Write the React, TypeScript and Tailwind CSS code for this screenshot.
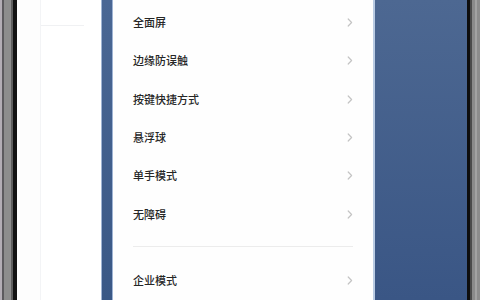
import React from "react";

const items = ["全面屏", "边缘防误触", "按键快捷方式", "悬浮球", "单手模式", "无障碍"];

function Chevron() {
  return (
    <svg width="6" height="9" viewBox="0 0 6 9" className="shrink-0">
      <polyline points="1.2,1 4.6,4.5 1.2,8" fill="none" stroke="#c4c4c4" strokeWidth="1.2" strokeLinecap="round" strokeLinejoin="round" />
    </svg>
  );
}

function Row({ label }: { label: string }) {
  return (
    <div className="flex h-[38.5px] items-center justify-between">
      <span className="text-[11px] font-medium leading-none text-[#262626]">{label}</span>
      <Chevron />
    </div>
  );
}

export default function App() {
  return (
    <div
      className="flex h-[300px] w-[480px] overflow-hidden bg-white"
      style={{ fontFamily: '"Noto Sans CJK SC", "Noto Sans", sans-serif' }}
    >
      {/* left phone frame */}
      <div className="flex h-full w-[17px] shrink-0">
        <div className="w-[2px] bg-[#b3adb5]" />
        <div className="w-[2px] bg-[#5c5a5e]" />
        <div className="w-[7px] bg-[#8d8d8d]" />
        <div className="w-[2px] bg-[#5e5e5e]" />
        <div className="w-[4px] bg-[#121212]" />
      </div>
      {/* left white area */}
      <div className="flex h-full w-[84px] shrink-0 bg-white">
        <div className="w-[23px] bg-[#fdfdfd]" />
        <div className="flex w-[61px] flex-col border-l border-[#f3f4f6]">
          <div className="h-[26px] w-[43px] border-b border-[#f0f1f3]" />
        </div>
      </div>
      {/* left blue strip */}
      <div className="h-full w-[12px] shrink-0 border-x border-[#9fb4d4] bg-gradient-to-b from-[#4a6794] to-[#3a5886]" />
      {/* settings list */}
      <div className="flex h-full w-[260px] shrink-0 flex-col bg-[#fefefe] px-[20px] pt-[3px]">
        {items.map((t) => (
          <Row key={t} label={t} />
        ))}
        <div className="mt-[12px] h-px w-full bg-[#ececec]" />
        <div className="mt-[15px]">
          <Row label="企业模式" />
        </div>
      </div>
      {/* right blue area */}
      <div className="h-full w-[94px] shrink-0 border-l-2 border-[#b9cbe3] bg-gradient-to-b from-[#4d6892] to-[#3a5685]" />
      {/* right phone frame */}
      <div className="flex h-full w-[13px] shrink-0">
        <div className="w-[3px] bg-[#0e0e0e]" />
        <div className="w-[2px] bg-[#4a4a4a]" />
        <div className="w-[3px] bg-[#8a8a8a]" />
        <div className="w-[2px] bg-[#a2a2a2]" />
        <div className="w-[3px] bg-[#8c8c8c]" />
      </div>
    </div>
  );
}
